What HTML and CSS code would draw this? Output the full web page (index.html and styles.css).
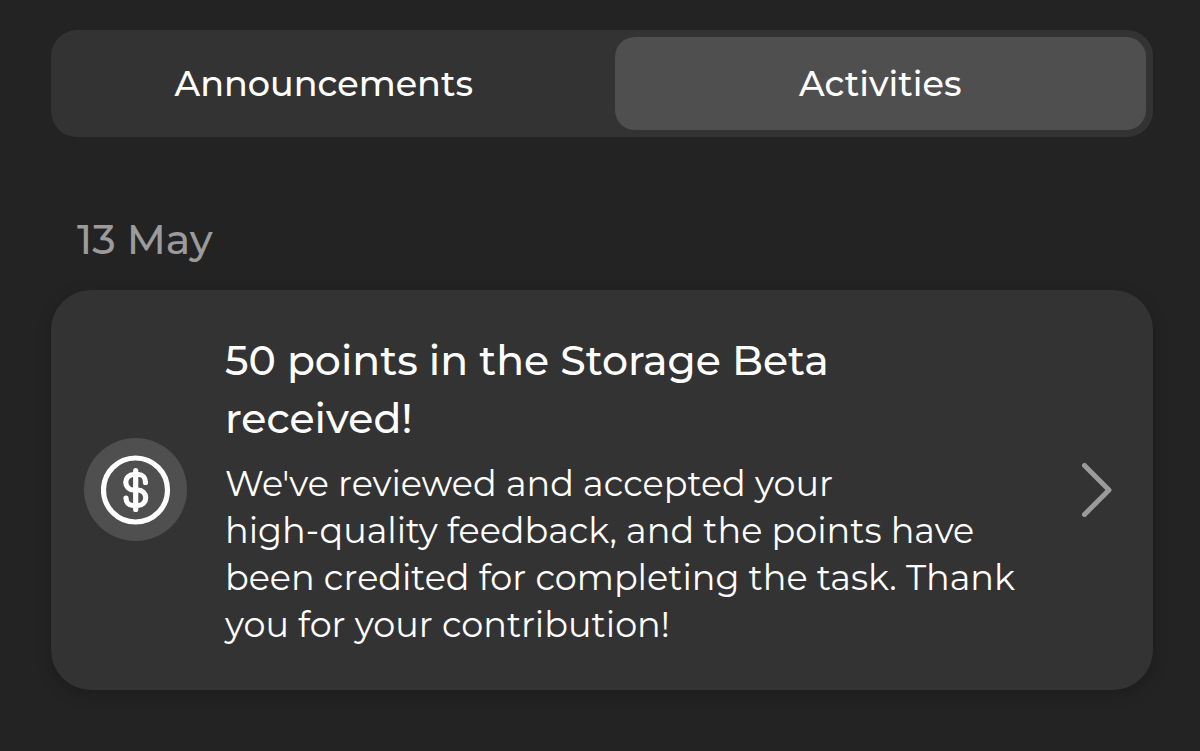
FILE: index.html
```
<!DOCTYPE html>
<html lang="en">
<head>
    <meta charset="UTF-8">
    <meta name="viewport" content="width=device-width, initial-scale=1.0">
    <title>Activities</title>
    <link rel="stylesheet" href="styles.css">
</head>
<body>
    <div class="tabs" role="tablist">
        <button type="button" class="tab" role="tab" aria-selected="false">Announcements</button>
        <button type="button" class="tab active" role="tab" aria-selected="true">Activities</button>
    </div>
    <main>
        <h2 class="date">13 May</h2>
        <a class="card" href="#">
            <span class="card-icon">
                <svg viewBox="0 0 70 70" width="70" height="70" fill="none" stroke="currentColor" stroke-width="5.2" stroke-linecap="round" stroke-linejoin="round">
                    <circle cx="34.5" cy="35" r="32"/>
                    <path d="M44.500 27.500c0-5-3-8-7-8h-5a7.750 7.750 0 0 0 0 15.500h4.500a7.750 7.750 0 0 1 0 15.500h-5c-4 0-7-3-7-7.500"/>
                    <path d="M34.700 15.500v39"/>
                </svg>
            </span>
            <span class="card-text">
                <span class="card-title">50 points in the Storage Beta<br>received!</span>
                <span class="card-message">We've reviewed and accepted your<br>high-quality feedback, and the points have<br>been credited for completing the task. Thank<br>you for your contribution!</span>
            </span>
            <svg class="chevron" viewBox="0 0 30 54" width="30" height="54" fill="none" stroke="currentColor" stroke-width="5" stroke-linecap="round" stroke-linejoin="round">
                <path d="M2.500 2.500l24.500 24.500-24.500 24.500"/>
            </svg>
        </a>
    </main>
</body>
</html>
```
FILE: styles.css
```
* {
    box-sizing: border-box;
}

body {
    margin: 0;
    padding: 30px 47px 60px 51px;
    background: #232323;
    color: #ffffff;
    font-family: Montserrat, Inter, sans-serif;
}

.tabs {
    display: flex;
    gap: 25px;
    padding: 7px;
    border-radius: 26px;
    background: #333333;
}

.tab {
    flex: 1;
    height: 93px;
    padding: 0;
    border: none;
    border-radius: 20px;
    background: transparent;
    color: inherit;
    font-family: inherit;
    font-size: 35px;
    font-weight: 500;
    cursor: pointer;
}

.tab.active {
    background: #4f4f4f;
}

.date {
    margin: 76px 0 25px;
    padding-left: 26px;
    color: #9b9b9b;
    font-size: 41px;
    font-weight: 500;
    line-height: 52px;
}

.card {
    display: flex;
    align-items: center;
    padding: 41px 41px 42px 33px;
    border-radius: 40px;
    background: #333333;
    color: inherit;
    text-decoration: none;
    box-shadow: 0 4px 16px rgba(0, 0, 0, 0.2);
}

.card-icon {
    display: flex;
    flex: none;
    align-items: center;
    justify-content: center;
    width: 103px;
    height: 103px;
    margin-right: 38px;
    border-radius: 50%;
    background: #4f4f4f;
}

.card-text {
    flex: 1;
}

.card-title {
    display: block;
    margin-bottom: 13px;
    font-size: 41px;
    font-weight: 500;
    line-height: 58px;
}

.card-message {
    display: block;
    font-size: 35px;
    line-height: 47px;
}

.chevron {
    flex: none;
    color: #9b9b9b;
}
```
